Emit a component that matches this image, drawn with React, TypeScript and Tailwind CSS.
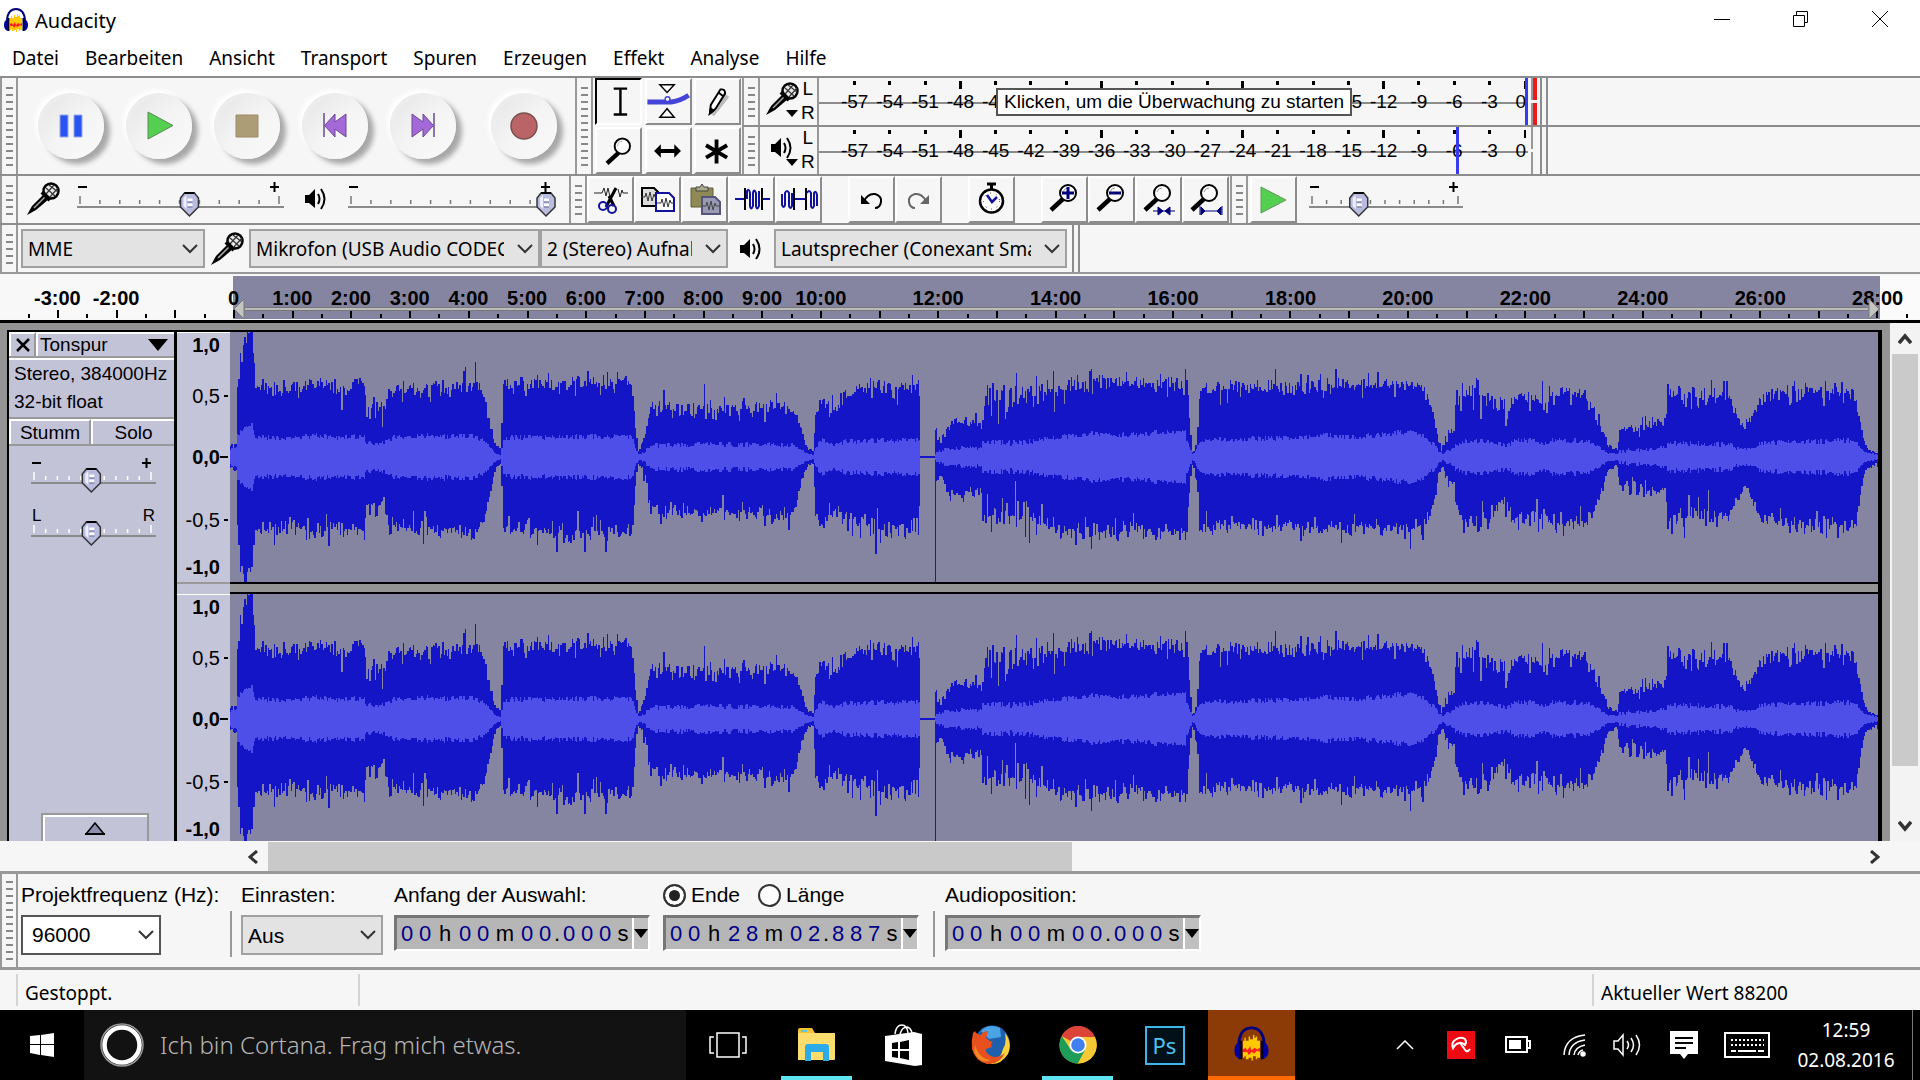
import type { ReactNode } from "react"
import clsx from "clsx"

const MENUS = ["Datei", "Bearbeiten", "Ansicht", "Transport", "Spuren", "Erzeugen", "Effekt", "Analyse", "Hilfe"]

/* ---------- waveform ---------- */

// x, peak above the axis, peak below the axis, rms, jitter
const ENVELOPE: number[][] = [
  [0, 12, 12, 8, 3], [6, 14, 14, 9, 3], [7, 72, 70, 22, 4], [9, 75, 80, 26, 6], [10, 110, 123, 28, 3], [12, 84, 100, 26, 3],
  [13, 125, 125, 30, 0], [16, 112, 125, 31, 0], [17, 130, 115, 31, 8], [21, 128, 110, 32, 6], [23, 100, 85, 26, 5],
  [25, 70, 72, 20, 7], [60, 66, 68, 19, 8], [85, 74, 78, 21, 7], [110, 68, 68, 20, 8], [134, 76, 75, 21, 6],
  [136, 42, 45, 13, 6], [143, 55, 52, 14, 9], [149, 44, 50, 13, 6], [153, 40, 46, 14, 8], [157, 68, 68, 19, 7],
  [190, 70, 75, 21, 8], [220, 70, 72, 21, 7], [240, 72, 78, 21, 8], [251, 68, 68, 18, 6], [256, 52, 52, 14, 3],
  [261, 28, 28, 8, 2], [265, 12, 12, 4, 1], [271, 8, 6, 2, 1], [272, 76, 72, 19, 6], [300, 72, 74, 20, 7],
  [340, 74, 78, 20, 8], [370, 74, 76, 21, 8], [401, 75, 75, 20, 6], [403, 52, 55, 16, 3], [405, 28, 30, 9, 3],
  [408, 5, 6, 3, 1], [411, 14, 12, 3, 3], [415, 24, 30, 6, 5], [420, 50, 52, 12, 5], [450, 48, 56, 12, 8],
  [480, 50, 54, 13, 7], [520, 48, 57, 12, 7], [550, 50, 60, 13, 7], [565, 45, 50, 12, 4], [571, 25, 25, 7, 2],
  [576, 9, 9, 4, 1], [583, 6, 5, 2, 1], [584, 38, 54, 9, 5], [592, 58, 68, 17, 7], [602, 44, 52, 13, 8], [612, 56, 58, 15, 9],
  [630, 68, 66, 16, 11], [660, 70, 73, 17, 10], [688, 72, 74, 17, 10], [689, 62, 48, 16, 4], [690, 1, 1, 0, 0],
  [704, 1, 1, 0, 0], [705, 27, 26, 6, 3], [710, 18, 18, 6, 3], [718, 32, 36, 9, 5], [728, 38, 38, 9, 4], [745, 35, 34, 9, 5],
  [751, 28, 35, 9, 4], [752, 58, 60, 15, 14], [780, 55, 58, 14, 14], [800, 62, 60, 15, 13], [825, 68, 72, 20, 9],
  [860, 76, 80, 23, 7], [900, 73, 72, 22, 7], [930, 75, 76, 25, 6], [955, 73, 76, 25, 7], [956, 82, 76, 18, 4],
  [960, 25, 22, 8, 2], [962, 4, 6, 3, 1], [967, 16, 30, 10, 4], [969, 68, 70, 16, 6], [1000, 68, 68, 18, 7], [1060, 70, 70, 19, 7],
  [1090, 72, 72, 22, 7], [1130, 72, 70, 20, 7], [1172, 74, 72, 25, 6], [1192, 70, 72, 23, 6], [1199, 55, 60, 15, 8],
  [1204, 36, 42, 12, 3], [1208, 15, 15, 6, 2], [1212, 10, 8, 3, 2], [1216, 26, 20, 6, 5], [1224, 25, 28, 9, 3],
  [1225, 58, 48, 12, 8], [1235, 62, 66, 16, 8], [1247, 66, 66, 17, 9], [1262, 54, 56, 16, 8], [1277, 42, 46, 11, 7],
  [1284, 60, 62, 17, 6], [1308, 60, 62, 16, 8], [1314, 48, 50, 13, 9], [1320, 62, 68, 17, 7], [1358, 64, 66, 16, 7],
  [1366, 42, 48, 12, 7], [1373, 26, 30, 8, 3], [1377, 12, 13, 4, 1], [1387, 7, 9, 3, 1], [1389, 26, 30, 6, 4],
  [1402, 33, 33, 7, 7], [1420, 36, 38, 8, 6], [1435, 32, 32, 9, 5], [1437, 66, 68, 14, 8], [1460, 58, 56, 13, 12],
  [1480, 62, 60, 13, 10], [1500, 58, 60, 13, 8], [1505, 42, 45, 9, 6], [1514, 31, 28, 8, 4], [1525, 46, 48, 9, 4], [1531, 64, 60, 15, 7],
  [1560, 62, 68, 15, 9], [1600, 68, 68, 16, 9], [1623, 66, 70, 17, 5], [1628, 42, 50, 12, 4], [1632, 20, 22, 7, 2],
  [1637, 8, 10, 4, 1], [1648, 4, 6, 2, 2],
]

// single-column peaks: x, above, below
const SPIKES: number[][] = [
  [235, 90, 70], [245, 95, 72], [327, 70, 95], [355, 76, 95], [377, 85, 84], [434, 67, 60], [474, 73, 58], [559, 48, 73],
  [683, 82, 74], [705, 27, 125], [763, 74, 58], [807, 81, 78], [861, 88, 92], [896, 85, 74], [956, 88, 83], [1045, 88, 72],
  [1071, 83, 84], [1106, 88, 68], [1111, 70, 86], [1180, 72, 92], [1193, 66, 83], [1248, 77, 75], [1312, 76, 72],
  [1327, 62, 76], [1442, 60, 77], [1481, 77, 62], [1565, 76, 60], [1596, 66, 81], [1605, 74, 65],
]

const WAVE_W = 1648
const COL = WAVE_W / 1172

function buildWave() {
  let seed = 20160802
  const rand = () => {
    seed = (seed * 1103515245 + 12345) % 2147483648
    return seed / 2147483648
  }
  const peakTop: string[] = []
  const peakBottom: string[] = []
  const rmsTop: string[] = []
  const rmsBottom: string[] = []
  let k = 0
  for (let i = 0; i < 1172; i++) {
    const x = i * COL
    while (k < ENVELOPE.length - 2 && ENVELOPE[k + 1][0] <= x) k++
    const a = ENVELOPE[k]
    const b = ENVELOPE[k + 1]
    const f = (x - a[0]) / (b[0] - a[0])
    const [, up0, down0, rms0, jitter] = a.map((v, n) => v + (b[n] - v) * f)
    const wobble = () => (rand() + rand() - 1) * jitter * 1.3 + (rand() < 0.24 ? (rand() - 0.55) * jitter * 4 : 0)
    let up = Math.max(up0 + wobble(), Math.min(up0, 1))
    let down = Math.max(down0 + wobble(), Math.min(down0, 1))
    const spike = SPIKES.find((s) => s[0] >= x && s[0] < x + COL)
    if (spike) {
      up = spike[1]
      down = spike[2]
    }
    const rms = Math.max(0, rms0 + (rand() - 0.5) * Math.min(jitter, 6) * 0.9)
    const x0 = x.toFixed(1)
    const x1 = (x + COL).toFixed(1)
    const row = (y: number) => `${x0},${y.toFixed(1)} ${x1},${y.toFixed(1)}`
    const rowBack = (y: number) => `${x1},${y.toFixed(1)} ${x0},${y.toFixed(1)}`
    peakTop.push(row(125 - Math.min(up, 125)))
    peakBottom.unshift(rowBack(125 + Math.min(down, 125)))
    rmsTop.push(row(125 - Math.min(rms, up)))
    rmsBottom.unshift(rowBack(125 + Math.min(rms, down)))
  }
  return {
    peak: [...peakTop, ...peakBottom].join(" "),
    rms: [...rmsTop, ...rmsBottom].join(" "),
  }
}

const WAVE = buildWave()

function Waveform() {
  return (
    <svg viewBox="0 0 1648 250" preserveAspectRatio="none" shapeRendering="crispEdges" className="block h-[250px] w-full">
      <polygon points={WAVE.peak} fill="#1515c8" />
      <polygon points={WAVE.rms} fill="#4e4ee9" />
    </svg>
  )
}

/* ---------- icons ---------- */

function Mic() {
  return (
    <svg width="34" height="34" viewBox="0 0 34 34">
      <path d="M1 33 L6 24 L18 12 L23 17 L10 28 Z" fill="#000" />
      <path d="M8 26 L19 15" stroke="#aaa" strokeWidth="1.5" />
      <circle cx="25" cy="9" r="7.5" fill="#e8e8e8" stroke="#000" strokeWidth="2.5" />
      <path d="M20 6 L29 14 M23 3 L32 10 M20 12 L28 3 M24 15 L32 6" stroke="#333" strokeWidth="1.2" />
      <path d="M16 10 L24 18" stroke="#000" strokeWidth="4" />
    </svg>
  )
}

function Speaker() {
  return (
    <svg width="24" height="26" viewBox="0 0 24 26" fill="none" stroke="#000" strokeWidth="2">
      <path d="M1 9 H5 L11 3 V22 L5 17 H1 Z" fill="#000" stroke="none" />
      <path d="M14 8 Q17 13 14 18" />
      <path d="M17 3 Q24 13 17 23" />
    </svg>
  )
}

function Lens({ children }: { children?: ReactNode }) {
  return (
    <svg width="36" height="38" viewBox="0 0 36 38">
      <path d="M4 29 L17 17" stroke="#000" strokeWidth="4.5" />
      <circle cx="21" cy="12" r="8" fill="#fff" stroke="#000" strokeWidth="2" />
      <path d="M16 11 Q17 7 21 7" stroke="#999" fill="none" />
      {children}
    </svg>
  )
}

function AudacityLogo({ size }: { size: number }) {
  return (
    <svg width={size} height={size} viewBox="0 0 26 26">
      <path d="M4 13 Q5 2 13 2 Q21 2 22 13" fill="none" stroke="#00007a" strokeWidth="2" />
      <path
        d="M7 23 V11 H8 V9 H9 V11 H11 V8 H12 V10 H14 V7 H15 V9 H16 V8 H17 V11 H19 V23 H17 V24 H16 V22 H14 V25 H13 V23 H11 V24 H9 V22 H8 V23 Z"
        fill="#ffc800"
      />
      <path d="M7 17 L9 16 L10 18 L12 15 L13 18 L15 16 L17 17 L19 16 V19 L17 18 L15 20 L13 19 L11 21 L10 19 L7 19 Z" fill="#f22" />
      <path d="M5 12 Q1 13 1 18 Q1 23 5 24 Z M21 12 Q25 13 25 18 Q25 23 21 24 Z" fill="#0000a0" />
      <path d="M5.5 11 V24 M20.5 11 V24" stroke="#000030" strokeWidth="2" />
    </svg>
  )
}

const TRANSPORT: { label: string; icon: ReactNode }[] = [
  { label: "Pause", icon: <path d="M9 9 h8 v22 h-8 z M23 9 h8 v22 h-8 z" fill="#2a54f0" stroke="#98a8e8" /> },
  { label: "Wiedergabe", icon: <path d="M9 6 L34 19.5 L9 33 Z" fill="#55cf50" stroke="#5a8a58" /> },
  { label: "Stopp", icon: <path d="M9 9 h22 v22 h-22 z" fill="#ad9d76" stroke="#9a8c68" /> },
  {
    label: "Zum Anfang",
    icon: (
      <g fill="#a468d8" stroke="#6a4a90">
        <path d="M9 7 V31" strokeWidth="1.5" />
        <path d="M20 8 V16 L31 8 V31 L20 23 V31 L9.5 19.5 Z" />
      </g>
    ),
  },
  {
    label: "Zum Ende",
    icon: (
      <g fill="#a468d8" stroke="#6a4a90">
        <path d="M31 7 V31" strokeWidth="1.5" />
        <path d="M20 8 V16 L9 8 V31 L20 23 V31 L30.5 19.5 Z" />
      </g>
    ),
  },
  { label: "Aufnahme", icon: <circle cx="20" cy="20" r="13" fill="#bb6468" stroke="#7a5050" strokeWidth="1.5" /> },
]

const TOOLS: { label: string; icon: ReactNode }[] = [
  { label: "Auswahl", icon: <path d="M19 10 h14 M19 37 h14 M26 10 v27" stroke="#000" strokeWidth="2.5" fill="none" /> },
  {
    label: "Hüllkurve",
    icon: (
      <g fill="#fff" stroke="#000" strokeWidth="1.5">
        <path d="M2 24 H27 Q36 23 45 17" stroke="#4444d8" strokeWidth="5" fill="none" />
        <path d="M15 6 H30 L22.5 14 Z M15 40 H30 L22.5 31 Z" />
        <circle cx="23" cy="21" r="2.5" stroke="#4444d8" />
      </g>
    ),
  },
  {
    label: "Zeichnen",
    icon: (
      <g strokeWidth="2">
        <path d="M18 37 L34 17" stroke="#bbb" strokeWidth="6" />
        <path d="M16 36 L17 27 L27 11 Q32 10 32 15 L22 31 Z" fill="#fff" stroke="#000" />
        <path d="M16 36 L17 31 L20 33 Z M25 14 L30 18" stroke="#000" fill="#000" />
      </g>
    ),
  },
  {
    label: "Zoom",
    icon: (
      <g>
        <path d="M12 37 L24 26" stroke="#000" strokeWidth="4.5" />
        <circle cx="28" cy="19" r="8" fill="#fff" stroke="#000" strokeWidth="2" />
        <path d="M23 19 Q23 14 28 14" stroke="#aaa" fill="none" />
      </g>
    ),
  },
  {
    label: "Verschieben",
    icon: <path d="M9 24 L16 17 V22 H30 V17 L37 24 L30 31 V26 H16 V31 Z" fill="#000" />,
  },
  { label: "Multi", icon: <path d="M23 12 V37 M12 18 L34 31 M34 18 L12 31" stroke="#000" strokeWidth="4" /> },
]

const trace = "M0 6 h4 l1 -4 l2 8 l2 -9 l2 9 l2 -7 l1 3 h3"

const EDIT: ({ label: string; icon: ReactNode } | null)[] = [
  {
    label: "Ausschneiden",
    icon: (
      <g fill="none">
        <path d="M2 12 h8 l2 -5 l2 8 l2 -8 l2 9 M26 8 l2 8 l2 -7 l1 3 h5" stroke="#222" />
        <path d="M24 7 L14 26 M17 15 L22 25" stroke="#000" strokeWidth="3" />
        <circle cx="11" cy="25" r="4" stroke="#1111a0" strokeWidth="2" />
        <circle cx="20" cy="28" r="4" stroke="#1111a0" strokeWidth="2" />
      </g>
    ),
  },
  {
    label: "Kopieren",
    icon: (
      <g>
        <path d="M3 7 h12 l4 4 v14 h-16 z" fill="#ddd" stroke="#000" strokeWidth="2" />
        <path d={trace} transform="translate(2 10)" fill="none" stroke="#333" />
        <path d="M17 12 h13 l5 5 v13 h-18 z" fill="#fff" stroke="#1111a0" strokeWidth="2" />
        <path d={trace} transform="translate(18 16)" fill="none" stroke="#333" />
      </g>
    ),
  },
  {
    label: "Einfügen",
    icon: (
      <g>
        <path d="M5 7 h22 v19 h-22 z" fill="#8f8a55" stroke="#5f5c38" />
        <path d="M10 10 V6 h4 l2 -3 l2 3 h4 v4 z" fill="#aaa88a" stroke="#444" />
        <path d="M16 16 h13 l5 5 v12 h-18 z" fill="#9a9ab4" stroke="#54547c" strokeWidth="2" />
        <path d={trace} transform="translate(16 19)" fill="none" stroke="#444" />
      </g>
    ),
  },
  {
    label: "Zuschneiden",
    icon: (
      <g fill="none" stroke="#1111a0" strokeWidth="2">
        <path d="M2 18 H11 M29 18 H37" />
        <path d="M12 7 V29 M29 7 V29" stroke="#000" />
        <path d="M14 18 V10 Q16 7 17 12 V25 Q18 30 20 25 V12 Q21 7 23 12 V25 Q24 30 26 25 V10" />
      </g>
    ),
  },
  {
    label: "Stille",
    icon: (
      <g fill="none" stroke="#1111a0" strokeWidth="2">
        <path d="M2 13 V24 Q4 28 5 24 V12 Q7 8 9 12 V25 Q10 29 12 25 V12" />
        <path d="M14 18 H26" />
        <path d="M14 7 V29 M26 7 V29" stroke="#000" />
        <path d="M27 12 Q29 8 31 12 V25 Q32 29 34 25 V12 Q36 9 37 14 V25" />
      </g>
    ),
  },
  null,
  {
    label: "Rückgängig",
    icon: (
      <g>
        <path d="M11 20 Q15 12 22 13 Q29 15 28 21 Q27 27 22 27" fill="none" stroke="#000" strokeWidth="2" />
        <path d="M8 14 V23 H17 Z" fill="#000" />
      </g>
    ),
  },
  {
    label: "Wiederholen",
    icon: (
      <g>
        <path d="M26 20 Q22 12 15 13 Q8 15 9 21 Q10 27 15 27" fill="none" stroke="#666" strokeWidth="2" />
        <path d="M29 14 V23 H20 Z" fill="#666" />
      </g>
    ),
  },
  null,
  {
    label: "Timer",
    icon: (
      <g>
        <path d="M14 3 h9 M18.5 3 v5" stroke="#000" strokeWidth="3" />
        <circle cx="18.5" cy="20" r="11.5" fill="#fff" stroke="#000" strokeWidth="2.5" />
        <path d="M14 14 L19 21 L24 16" fill="none" stroke="#1111a0" strokeWidth="2.5" />
        <circle cx="18.5" cy="20" r="8" fill="none" stroke="#333" strokeDasharray="1 5" />
      </g>
    ),
  },
  null,
]

const ZOOMS: { label: string; icon: ReactNode }[] = [
  {
    label: "Vergrößern",
    icon: <Lens><path d="M15 12 h12 M21 6 v12" stroke="#00007a" strokeWidth="3" /></Lens>,
  },
  { label: "Verkleinern", icon: <Lens><path d="M15 12 h12" stroke="#00007a" strokeWidth="3" /></Lens> },
  {
    label: "Auswahl einpassen",
    icon: (
      <Lens>
        <path d="M12 30 h22 M17 26 l5 4 l-5 4 z M29 26 l-5 4 l5 4 z" stroke="#00007a" fill="#00007a" />
      </Lens>
    ),
  },
  {
    label: "Projekt einpassen",
    icon: (
      <Lens>
        <path d="M13 30 h20 M12 25 v9 M34 25 v9 M13 26 l4 4 l-4 4 z M33 26 l-4 4 l4 4 z" stroke="#00007a" fill="#00007a" />
      </Lens>
    ),
  },
]

/* ---------- building blocks ---------- */

function Grip({ lines }: { lines: number }) {
  return (
    <div className="flex w-[18px] shrink-0 flex-col items-center justify-center gap-[5px] border-x-2 border-[#999] bg-[#f6f6f6]">
      {Array.from({ length: lines }, (_, i) => (
        <span key={i} className="h-[2px] w-[7px] bg-[#888]" />
      ))}
    </div>
  )
}

function IconButton({ label, children, active }: { label: string; children: ReactNode; active?: boolean }) {
  return (
    <button
      aria-label={label}
      className={clsx(
        "flex w-[47px] shrink-0 items-center justify-center border-2",
        active
          ? "border-t-black border-r-white border-b-white border-l-black"
          : "border-t-white border-r-[#8c8c8c] border-b-[#8c8c8c] border-l-white",
      )}
    >
      {children}
    </button>
  )
}

interface SliderProps {
  label: string
  width: number
  value: number
  ends?: [string, string]
  tick?: string
}

function Slider({ label, width, value, ends, tick = "#777" }: SliderProps) {
  const x = 3 + ((width - 8) * value) / 100
  return (
    <div className="relative flex shrink-0 flex-col" style={{ width }}>
      <div className="flex h-[11px] items-center justify-between px-[1px] text-[17px] leading-none">
        {ends ? (
          <>
            <span>{ends[0]}</span>
            <span>{ends[1]}</span>
          </>
        ) : (
          <>
            <span className="h-[2px] w-[9px] bg-black" />
            <svg width="9" height="10" viewBox="0 0 9 10" className="mr-1">
              <path d="M0 5 H9 M4.5 0 V10" stroke="#000" strokeWidth="2" />
            </svg>
          </>
        )}
      </div>
      <svg width={width} height="25" viewBox={`0 0 ${width} 25`} className="block overflow-visible">
        {Array.from({ length: 11 }, (_, i) => {
          const tx = 3 + ((width - 8) * i) / 10
          const end = i === 0 || i === 10
          return <path key={i} d={`M${tx} ${end ? 4 : 8} V12`} stroke={tick} strokeWidth="1.5" />
        })}
        <path d={`M0 15 H${width}`} stroke="#8a8a8a" strokeWidth="2" />
        <g transform={`translate(${x - 10} 0)`}>
          <path d="M5 1 H15 L19 6 V15 L10 24 L1 15 V6 Z" fill="#b9bbdf" stroke="#333" strokeWidth="1.5" />
          <path d="M4 6 L7 3 V17 L4 14 Z" fill="#eef" />
          <path d="M8 8 h5 M8 13 h5" stroke="#fff" strokeWidth="3" />
          <path d="M8 10 h5 M8 15 h5" stroke="#66688f" />
          <path d="M5 1 H15" stroke="#000" strokeWidth="2" />
        </g>
      </svg>
      <input type="range" aria-label={label} defaultValue={value} className="absolute inset-0 size-full opacity-0" />
    </div>
  )
}

function Dropdown({ label, value, className }: { label: string; value: string; className: string }) {
  return (
    <div className={clsx("relative shrink-0", className)}>
      <select
        aria-label={label}
        className="size-full appearance-none overflow-hidden border-2 border-[#a0a0a0] bg-[#e3e3e3] pt-[1px] pr-[34px] pl-[5px] whitespace-nowrap"
      >
        <option>{value}</option>
      </select>
      <Chevron />
    </div>
  )
}

function Chevron() {
  return (
    <svg width="16" height="10" viewBox="0 0 16 10" className="pointer-events-none absolute top-[15px] right-[7px]">
      <path d="M1 1 L8 8 L15 1" fill="none" stroke="#333" strokeWidth="2" />
    </svg>
  )
}

function Meter({ kind, mark, clipped, tip }: { kind: "Aufnahme" | "Wiedergabe"; mark: string; clipped?: boolean; tip?: string }) {
  const marks = Array.from({ length: 19 }, (_, i) => -57 + i * 3)
  return (
    <div className="flex flex-1 border-t-2 border-[#8c8c8c]">
      <Grip lines={5} />
      <button aria-label={`Pegel ${kind}`} className="flex w-[57px] shrink-0 items-center pl-[4px]">
        <span className="flex w-9 justify-center pb-[6px]">{kind === "Aufnahme" ? <Mic /> : <Speaker />}</span>
        <svg width="12" height="7" viewBox="0 0 12 7" className="-ml-[14px] translate-y-3">
          <path d="M0 0 H12 L6 7 Z" fill="#000" />
        </svg>
        <span className="ml-[3px] flex flex-col gap-[4px] pb-[2px] text-[19px] leading-5">
          <span>L</span>
          <span>R</span>
        </span>
      </button>
      <div className="relative flex w-[711px] shrink-0 flex-col border-l-2 border-[#999] pr-[2px] pl-[18px]">
        <span className="absolute top-[24px] right-0 left-0 h-[2px] bg-[#8c8c8c]" />
        <div className="flex h-[12px] items-start pt-[3px]">
          {marks.map((m) => (
            <span key={m} className="flex flex-1 justify-center">
              <span className={clsx("w-[3px] bg-black", m % 12 === 0 ? "h-[8px]" : "h-[4px]")} />
            </span>
          ))}
          <span className="flex w-[19px] justify-end">
            <span className="h-[8px] w-[2px] bg-black" />
          </span>
        </div>
        <div className="relative flex text-[19px] leading-6">
          {marks.map((m) => (
            <span key={m} className="flex-1 text-center">
              {m}
            </span>
          ))}
          <span className="w-[19px] text-right">0</span>
        </div>
        <span className={clsx("absolute inset-y-0 w-[3px] bg-[#3a3af0]", mark)} />
        {tip && (
          <div className="absolute top-[10px] left-[177px] border-2 border-[#555] bg-white px-[6px] text-[19px] leading-6 whitespace-nowrap">
            {tip}
          </div>
        )}
      </div>
      <div className="ml-[3px] flex w-[6px] flex-col gap-[3px]">
        <span className={clsx("h-[22px] border-l-2 border-[#999]", clipped && "bg-[#f01818]")} />
        <span className={clsx("flex-1 border-l-2 border-[#999]", clipped && "bg-[#f01818]")} />
      </div>
      <div className="ml-[3px] w-[8px] border-x-2 border-[#8c8c8c]" />
    </div>
  )
}

const TIME_CLASS: Record<string, string> = { h: "w-[22px]", m: "w-[26px]", s: "w-[18px]", ".": "w-[6px]" }

function TimeField({ label, value }: { label: string; value: string }) {
  return (
    <div
      aria-label={label}
      className="flex h-9 w-[256px] items-center border-t-[3px] border-r-2 border-b-2 border-l-[3px] border-t-[#777] border-r-white border-b-white border-l-[#777] bg-[#b6b6b6] pl-[1px] text-[22px] leading-8"
    >
      {value.split("").map((c, i) => (
        <span
          key={i}
          className={clsx("text-center", TIME_CLASS[c] ?? "w-[18px]", /\d/.test(c) ? "text-[#00008b]" : "text-black")}
        >
          {c}
        </span>
      ))}
      <button aria-label="Format" className="flex h-full flex-1 items-center justify-center border-l-2 border-white bg-[#c0c0c0]">
        <svg width="14" height="9" viewBox="0 0 14 9">
          <path d="M0 0 H14 L7 9 Z" fill="#000" />
        </svg>
      </button>
    </div>
  )
}

/* ---------- toolbars ---------- */

function Toolbars() {
  return (
    <div className="bg-[#f6f6f6] font-['Liberation_Sans',sans-serif]">
      <div className="flex h-[98px]">
        <div className="flex border-t-2 border-[#8c8c8c]">
          <Grip lines={12} />
          <div className="flex w-[557px] items-center pl-[20px]">
            {TRANSPORT.map((b) => (
              <button
                key={b.label}
                aria-label={b.label}
                className="mr-[22px] flex size-[66px] shrink-0 items-center justify-center rounded-full bg-linear-to-br from-[#e4e4e4] via-[#f4f4f4] to-[#fafafa] shadow-[inset_2px_2px_5px_#eeeeee,6px_5px_5px_#a8a8a8,-3px_-3px_5px_#ffffff,0_0_0_4px_#f7f7f7] last:ml-[13px]"
              >
                <svg width="40" height="40" viewBox="0 0 40 40">
                  {b.icon}
                </svg>
              </button>
            ))}
          </div>
          <Grip lines={12} />
          <div className="grid w-[149px] grid-cols-3 grid-rows-2 gap-[2px] pl-[2px]">
            {TOOLS.map((tool, i) => (
              <IconButton key={tool.label} label={tool.label} active={i === 0}>
                <svg width="47" height="46" viewBox="0 0 48 48" className="shrink-0">
                  {tool.icon}
                </svg>
              </IconButton>
            ))}
          </div>
        </div>
        <div className="flex flex-1 flex-col">
          <Meter kind="Aufnahme" mark="right-0" clipped tip="Klicken, um die Überwachung zu starten" />
          <Meter kind="Wiedergabe" mark="right-[69px]" />
        </div>
      </div>

      <div className="flex h-[49px] border-t-2 border-[#8c8c8c]">
        <Grip lines={5} />
        <div className="flex w-[551px] items-center pb-[1px]">
          <span className="ml-2">
            <Mic />
          </span>
          <div className="ml-[17px]">
            <Slider label="Aufnahmelautstärke" width={207} value={55} />
          </div>
          <span className="mx-5">
            <Speaker />
          </span>
          <Slider label="Wiedergabelautstärke" width={207} value={98} />
        </div>
        <Grip lines={5} />
        {EDIT.map((b, i) =>
          b ? (
            <IconButton key={b.label} label={b.label}>
              <svg width="38" height="38" viewBox="0 0 38 38" className="shrink-0">
                {b.icon}
              </svg>
            </IconButton>
          ) : (
            <span key={i} className="w-[26px]" />
          ),
        )}
        {ZOOMS.map((b) => (
          <IconButton key={b.label} label={b.label}>
            {b.icon}
          </IconButton>
        ))}
        <div className="flex gap-[2px] pl-[1px]">
          <Grip lines={5} />
          <IconButton label="Mit Geschwindigkeit abspielen">
            <svg width="28" height="28" viewBox="0 0 28 28">
              <path d="M1 1 L26 14 L1 27 Z" fill="#55cf50" stroke="#5a9a58" />
            </svg>
          </IconButton>
        </div>
        <div className="ml-3 flex items-center pb-[1px]">
          <Slider label="Abspielgeschwindigkeit" width={154} value={32} />
        </div>
      </div>

      <div className="flex h-[49px] items-stretch border-t-2 border-[#8c8c8c] font-['Noto_Sans',sans-serif] text-[19px]">
        <Grip lines={5} />
        <div className="flex items-center pl-[3px]">
          <Dropdown label="Audio-Host" value="MME" className="h-[39px] w-[184px]" />
          <span className="mx-[5px]">
            <Mic />
          </span>
          <Dropdown label="Aufnahmegerät" value="Mikrofon (USB Audio CODEC)" className="h-[39px] w-[291px]" />
          <Dropdown label="Aufnahmekanäle" value="2 (Stereo) Aufnahmekanäle" className="h-[39px] w-[188px]" />
          <span className="mx-[11px]">
            <Speaker />
          </span>
          <Dropdown label="Wiedergabegerät" value="Lautsprecher (Conexant Smart Audio)" className="h-[39px] w-[293px]" />
        </div>
        <div className="ml-[5px] w-[8px] border-x-2 border-[#8c8c8c]" />
      </div>
    </div>
  )
}

/* ---------- ruler and track ---------- */

function minuteLabel(minute: number) {
  if (minute === 0) return "0"
  if (minute === -1 || (minute > 10 && minute % 2)) return ""
  return `${minute}:00`
}

function Timeline() {
  return (
    <div className="relative h-[51px] border-t-2 border-b-[3px] border-t-[#999] border-b-black bg-[#f6f6f6] font-['Liberation_Sans',sans-serif]">
      <div className="flex h-[45px] pt-[2px]">
        <span className="w-[233px] bg-[#f8f8f8]" />
        <span className="flex-1 bg-[#8585a1]" />
        <span className="w-10 bg-[#fbfbfb]" />
      </div>
      <div className="absolute inset-0 flex flex-col overflow-hidden pt-[12px]">
        <div className="mr-[13px] ml-[28px] flex text-[20px] leading-6 font-bold">
          {Array.from({ length: 32 }, (_, i) => (
            <span key={i} className="flex w-0 flex-1 justify-center whitespace-nowrap">
              {minuteLabel(i - 3)}
            </span>
          ))}
        </div>
        <div className="-mr-[1px] ml-[14px] flex h-[8px] items-end">
          {Array.from({ length: 65 }, (_, i) => (
            <span key={i} className="flex flex-1 justify-center">
              <span className={clsx("w-[2px] bg-black", i % 2 ? "h-[8px]" : "h-[4px]")} />
            </span>
          ))}
        </div>
      </div>
      <div className="absolute right-10 bottom-0 left-[233px] flex items-center">
        <svg width="12" height="22" viewBox="0 0 12 22">
          <path d="M1 11 L11 1 V21 Z" fill="#c4c4c0" stroke="#777" />
        </svg>
        <span className="h-[4px] flex-1 border-y border-t-[#777] border-b-[#777] bg-[#bbb]" />
        <svg width="12" height="22" viewBox="0 0 12 22">
          <path d="M11 11 L1 1 V21 Z" fill="#c4c4c0" stroke="#777" />
        </svg>
      </div>
    </div>
  )
}

const LEVELS = [
  { text: "1,0", className: "font-bold" },
  { text: "0,5", className: "mt-[27px]", tick: "w-[4px]" },
  { text: "0,0", className: "mt-[37px] font-bold", tick: "w-[8px]" },
  { text: "-0,5", className: "mt-[39px]", tick: "w-[4px]" },
  { text: "-1,0", className: "mt-[23px] font-bold" },
]

function Channel({ last }: { last?: boolean }) {
  return (
    <div className={clsx("flex overflow-hidden", last ? "h-0 min-h-0 flex-1" : "h-[250px] shrink-0")}>
      <div className="w-[53px] shrink-0 border-t border-white bg-[#c5c5d9] text-[20px] leading-6">
        {LEVELS.map((l) => (
          <div key={l.text} className={clsx("relative h-6 pr-[10px] text-right", l.className)}>
            {l.text}
            {l.tick && <span className={clsx("absolute top-[11px] right-[2px] h-[2px] bg-black", l.tick)} />}
          </div>
        ))}
      </div>
      <div className="flex-1 bg-[#8585a1]">
        <Waveform />
      </div>
    </div>
  )
}

function Track() {
  return (
    <section className="flex min-h-[420px] flex-[1_1_0px] overflow-hidden bg-[#949494] pt-[7px] pl-[7px] font-['Liberation_Sans',sans-serif] text-[19px]">
      <div className="flex min-w-0 flex-1 border-x-2 border-t-2 border-black border-r-[4px]">
        <div className="flex w-[168px] shrink-0 flex-col border-r-[3px] border-black bg-[#c3c3d7]">
          <div className="flex h-[26px] shrink-0 border-b-2 border-[#999] leading-5">
            <button aria-label="Spur schließen" className="flex w-[27px] items-center justify-center border-2 border-white border-r-[#999] border-b-0">
              <svg width="14" height="14" viewBox="0 0 14 14">
                <path d="M1 1 L13 13 M13 1 L1 13" stroke="#000" strokeWidth="2.5" />
              </svg>
            </button>
            <button className="flex flex-1 items-center justify-between border-t-2 border-l-2 border-white pr-[6px] pl-[2px]">
              Tonspur
              <svg width="20" height="12" viewBox="0 0 20 12">
                <path d="M0 0 H20 L10 12 Z" fill="#000" />
              </svg>
            </button>
          </div>
          <div className="h-[59px] shrink-0 border-t-2 border-white pl-[5px] leading-7 whitespace-nowrap">
            Stereo, 384000Hz
            <br />
            32-bit float
          </div>
          <div className="flex h-[29px] shrink-0 border-y-2 border-[#999] leading-5">
            <button className="w-[82px] border-2 border-white border-b-0 border-r-[#999]">Stumm</button>
            <button className="flex-1 border-t-2 border-l-2 border-white">Solo</button>
          </div>
          <div className="mt-[11px] ml-[22px] flex flex-col gap-[17px]">
            <Slider label="Spurlautstärke" width={125} value={49} tick="#fff" />
            <Slider label="Balance" width={125} value={49} ends={["L", "R"]} tick="#fff" />
          </div>
          <button
            aria-label="Spur einklappen"
            className="mt-auto ml-[32px] flex h-7 w-[108px] shrink-0 items-center justify-center border-2 border-b-0 border-[#999] shadow-[inset_2px_2px_0_#ffffff]"
          >
            <svg width="20" height="13" viewBox="0 0 20 13">
              <path d="M1 12 L10 1 L19 12 Z" fill="#8e8eb0" stroke="#000" strokeWidth="1.5" />
              <path d="M0 12 H20" stroke="#000" strokeWidth="2" />
            </svg>
          </button>
        </div>
        <div className="flex min-w-0 flex-1 flex-col">
          <Channel />
          <div className="flex h-3 shrink-0">
            <span className="w-[53px] border-t-2 border-[#999] bg-[#c3c3d7]" />
            <span className="flex-1 border-y-2 border-black bg-[#949494]" />
          </div>
          <Channel last />
        </div>
      </div>
      <div className="-mt-[7px] ml-2 flex w-[30px] shrink-0 flex-col items-center bg-[#f3f3f3] px-[2px]">
        <button aria-label="Nach oben" className="flex h-[31px] items-center">
          <svg width="14" height="12" viewBox="0 0 14 12">
            <path d="M1 10 L7 3 L13 10" fill="none" stroke="#333" strokeWidth="3.5" />
          </svg>
        </button>
        <span className="h-0 w-full flex-[413] bg-[#cacaca]" />
        <span className="flex-[44]" />
        <button aria-label="Nach unten" className="flex h-[31px] items-center">
          <svg width="14" height="12" viewBox="0 0 14 12">
            <path d="M1 2 L7 9 L13 2" fill="none" stroke="#333" strokeWidth="3.5" />
          </svg>
        </button>
      </div>
    </section>
  )
}

function ScrollBar() {
  return (
    <div className="flex h-[30px] items-stretch bg-[#f6f6f6] pt-[1px] pr-[33px] pl-[238px]">
      <button aria-label="Nach links" className="flex w-[30px] items-center justify-center">
        <svg width="10" height="14" viewBox="0 0 10 14">
          <path d="M9 1 L2 7 L9 13" fill="none" stroke="#333" strokeWidth="3" />
        </svg>
      </button>
      <span className="flex-[803] bg-[#c9c9c9]" />
      <span className="flex-[791]" />
      <button aria-label="Nach rechts" className="flex w-[24px] items-center justify-center">
        <svg width="10" height="14" viewBox="0 0 10 14">
          <path d="M1 1 L8 7 L1 13" fill="none" stroke="#333" strokeWidth="3" />
        </svg>
      </button>
    </div>
  )
}

/* ---------- selection bar, status, taskbar ---------- */

function RadioLabel({ text, checked }: { text: string; checked?: boolean }) {
  return (
    <label className="flex items-center gap-[5px]">
      <input
        type="radio"
        name="selection-end"
        defaultChecked={checked}
        className="size-[23px] appearance-none rounded-full border-2 border-[#333] bg-white checked:shadow-[inset_0_0_0_4px_#ffffff] checked:bg-[#222]"
      />
      {text}
    </label>
  )
}

function SelectionBar() {
  return (
    <div className="flex h-[99px] border-y-[3px] border-[#999] bg-[#f6f6f6] font-['Liberation_Sans',sans-serif] text-[21px] leading-6">
      <Grip lines={12} />
      <div className="flex items-start pt-[9px] pl-[3px]">
        <div className="flex w-[209px] flex-col gap-[8px]">
          <label htmlFor="rate" className="whitespace-nowrap">
            Projektfrequenz (Hz):
          </label>
          <div className="relative h-10 w-[140px]">
            <input id="rate" defaultValue="96000" className="size-full border-2 border-[#555] bg-white pl-[9px]" />
            <Chevron />
          </div>
        </div>
        <span className="mt-7 h-[46px] w-[2px] bg-[#999]" />
        <div className="ml-[9px] flex w-[153px] flex-col gap-[8px]">
          <span>Einrasten:</span>
          <Dropdown label="Einrasten" value="Aus" className="h-10 w-[142px]" />
        </div>
        <div className="flex w-[269px] flex-col gap-[8px]">
          <span>Anfang der Auswahl:</span>
          <TimeField label="Anfang der Auswahl" value="00h00m00.000s" />
        </div>
        <div className="flex w-[270px] flex-col gap-[8px]">
          <div className="flex h-6 gap-[18px]">
            <RadioLabel text="Ende" checked />
            <RadioLabel text="Länge" />
          </div>
          <TimeField label="Ende der Auswahl" value="00h28m02.887s" />
        </div>
        <span className="mt-7 h-[46px] w-[2px] bg-[#999]" />
        <div className="ml-[10px] flex flex-col gap-[8px]">
          <span>Audioposition:</span>
          <TimeField label="Audioposition" value="00h00m00.000s" />
        </div>
      </div>
    </div>
  )
}

function TaskIcon({ label, children, open, active }: { label: string; children: ReactNode; open?: boolean; active?: boolean }) {
  return (
    <button
      aria-label={label}
      className={clsx(
        "relative flex w-[87px] items-center justify-center",
        active && "border-b-4 border-[#ff6a00] bg-[#8c3a06]",
      )}
    >
      {children}
      {open && <span className="absolute inset-x-2 bottom-0 h-1 bg-[#5fe4f2]" />}
    </button>
  )
}

function Taskbar() {
  return (
    <footer className="flex h-[70px] shrink-0 bg-black text-white">
      <button aria-label="Start" className="flex w-[84px] items-center justify-center">
        <svg width="24" height="24" viewBox="0 0 24 24" fill="#fff">
          <path d="M0 3 L10 2 V11 H0 Z M11 2 L24 0 V11 H11 Z M0 12 H10 V22 L0 20 Z M11 12 H24 V24 L11 22 Z" />
        </svg>
      </button>
      <label className="flex w-[602px] items-center gap-4 bg-[#121212] pl-4">
        <svg width="44" height="44" viewBox="0 0 44 44" fill="none">
          <circle cx="22" cy="22" r="21" stroke="#999" strokeWidth="1.5" />
          <circle cx="22" cy="22" r="17.5" stroke="#fff" strokeWidth="4.5" />
        </svg>
        <input
          aria-label="Suche"
          placeholder="Ich bin Cortana. Frag mich etwas."
          className="flex-1 bg-transparent text-[24px] font-light outline-none placeholder:text-[#b5b5b5]"
        />
      </label>
      <button aria-label="Taskansicht" className="flex w-[87px] items-center justify-start pl-[23px]">
        <svg width="38" height="26" viewBox="0 0 38 26" fill="none" stroke="#fff" strokeWidth="1.5">
          <path d="M8 1 H30 V25 H8 Z M5 5 H1 V21 H5 M33 5 H37 V21 H33" />
        </svg>
      </button>
      <TaskIcon label="Explorer" open>
        <svg width="38" height="34" viewBox="0 0 38 34">
          <path d="M0 2 Q0 0 2 0 H14 L17 5 H0 Z" fill="#f2c230" />
          <path d="M0 5 H37 V31 Q37 32 36 32 H0 Z" fill="#fbdc6c" />
          <path d="M3 2 h6 v2 h-6 z" fill="#5cc8e8" />
          <path d="M7 19 Q7 16 10 16 H28 Q31 16 31 19 V33 H25 V24 H13 V33 H7 Z" fill="#2cabe8" />
        </svg>
      </TaskIcon>
      <TaskIcon label="Store">
        <svg width="38" height="42" viewBox="0 0 38 42">
          <path d="M10 10 Q11 1 17 1 Q22 1 23 9 M15 10 Q17 3 22 3 Q26 4 27 9" fill="none" stroke="#fff" strokeWidth="1.5" />
          <path d="M0 12 L29 8 L37 10 V41 L30 42 L0 37 Z" fill="#fff" />
          <path d="M7 19 L13 18 V25 H7 Z M15 18 L24 16 V25 H15 Z M7 27 H13 V34 L7 33 Z M15 27 H24 V36 L15 34 Z" fill="#000" />
        </svg>
      </TaskIcon>
      <TaskIcon label="Firefox">
        <svg width="40" height="40" viewBox="0 0 40 40">
          <circle cx="21" cy="18" r="17.5" fill="#1e5fae" />
          <path d="M10 6 Q18 -2 29 3 L30 12 L18 14 Z" fill="#4aa4e4" />
          <path d="M34 8 Q42 18 37 29 Q30 40 19 39 Q30 34 32 24 Q36 18 34 8 Z" fill="#ffd23c" />
          <path d="M2 8 Q0 16 1 24 Q4 36 16 39 Q28 40 34 28 Q26 34 20 31 Q14 28 15 24 L21 22 Q19 19 22 17 Q18 16 15 13 L17 6 Q12 6 10 10 Q5 9 4 6 Z" fill="#e8501e" />
          <path d="M4 20 Q8 34 20 35 Q12 39 6 32 Q2 27 4 20 Z" fill="#f68a22" />
        </svg>
      </TaskIcon>
      <TaskIcon label="Chrome" open>
        <svg width="38" height="38" viewBox="0 0 38 38">
          <circle cx="19" cy="19" r="18.5" fill="#f7c934" />
          <path d="M19 19 L2.5 10 A18.5 18.5 0 0 1 36 11 H19 Z" fill="#dc4437" />
          <path d="M19 37.5 A18.5 18.5 0 0 1 2.8 10 L12 24 L26 24 Z" fill="#1f9d58" />
          <path d="M19 37.5 L27 23 L19 11 H36 A18.5 18.5 0 0 1 19 37.5 Z" fill="#f7c934" />
          <circle cx="19" cy="19" r="8.5" fill="#fff" />
          <circle cx="19" cy="19" r="6.8" fill="#3f7ff0" />
        </svg>
      </TaskIcon>
      <TaskIcon label="Photoshop">
        <span className="flex h-[39px] w-10 items-center justify-center border-2 border-[#3fb4e8] bg-[#02101a] text-[22px] text-[#4cc4f4]">
          Ps
        </span>
      </TaskIcon>
      <TaskIcon label="Audacity" active>
        <AudacityLogo size={37} />
      </TaskIcon>

      <div className="ml-auto flex items-center">
        <svg width="18" height="10" viewBox="0 0 18 10" fill="none" stroke="#fff" strokeWidth="1.5">
          <path d="M1 9 L9 1 L17 9" />
        </svg>
        <svg width="28" height="28" viewBox="0 0 28 28" className="ml-[33px]">
          <path d="M0 0 H28 V28 H0 Z" fill="#ee0a12" />
          <g fill="none" stroke="#fff" strokeWidth="2">
            <path d="M6 17 Q4 12 8 9 Q13 5 18 8 Q20 11 18 14 Q15 11 12 12 Q8 13 6 17 Z" />
            <path d="M13 12 L19 20 Q21 21 23 18" />
          </g>
        </svg>
        <svg width="26" height="18" viewBox="0 0 26 18" className="ml-[30px]">
          <path d="M1 1 H22 V16 H1 Z M23 5 h2 v7 h-2" fill="none" stroke="#fff" strokeWidth="2" />
          <path d="M4 4 H16 V13 H4 Z" fill="#fff" />
        </svg>
        <svg width="24" height="24" viewBox="0 0 24 24" className="ml-[32px]" fill="none" stroke="#fff" strokeWidth="1.5">
          <path d="M1 22 Q2 4 22 2 M6 22 Q7 9 22 7 M11 22 Q12 14 22 12" />
          <path d="M15 22 Q16 18 20 17" />
          <circle cx="20" cy="21" r="2" fill="#fff" />
        </svg>
        <svg width="30" height="26" viewBox="0 0 30 26" className="ml-[26px]" fill="none" stroke="#fff" strokeWidth="1.5">
          <path d="M1 9 H5 L10 3 V23 L5 17 H1 Z M14 9 Q17 13 14 17 M18 6 Q23 13 18 20 M23 3 Q30 13 23 23" />
        </svg>
        <svg width="28" height="28" viewBox="0 0 28 28" className="ml-[27px]">
          <path d="M0 0 H28 V23 H18 L14 28 L10 23 H0 Z" fill="#fff" />
          <path d="M5 7 H23 M5 12 H23 M5 17 H16" stroke="#000" strokeWidth="2" />
        </svg>
        <svg width="46" height="26" viewBox="0 0 46 26" className="ml-[26px]" fill="none" stroke="#fff" strokeWidth="2">
          <path d="M1 1 H45 V25 H1 Z" />
          <path d="M7 8 H40 M7 13 H40" strokeDasharray="2 2" />
          <path d="M7 19 H12 M14 19 H32 M34 19 H40" />
        </svg>
        <div className="ml-[24px] w-[104px] text-center text-[19px] leading-[30px]">
          12:59
          <br />
          02.08.2016
        </div>
        <span className="ml-[14px] h-[70px] w-[8px] border-l border-[#777]" />
      </div>
    </footer>
  )
}

export default function App() {
  return (
    <div className="flex min-h-screen flex-col bg-white font-['Noto_Sans',sans-serif] text-[19px] text-black">
      <header className="flex h-10 items-center pl-[3px]">
        <AudacityLogo size={26} />
        <h1 className="mt-[2px] ml-[6px] text-[20px]">Audacity</h1>
        <div className="ml-auto flex">
          <button aria-label="Minimieren" className="flex w-[79px] justify-center">
            <svg width="16" height="18" viewBox="0 0 16 18">
              <path d="M0 8.5 H16" stroke="#000" />
            </svg>
          </button>
          <button aria-label="Wiederherstellen" className="flex w-[79px] justify-center">
            <svg width="16" height="16" viewBox="0 0 16 16" fill="none" stroke="#000">
              <path d="M0.5 4.5 H11.5 V15.5 H0.5 Z M3.5 4.5 V0.5 H14.5 V11.5 H11.5" />
            </svg>
          </button>
          <button aria-label="Schließen" className="flex w-[80px] justify-center">
            <svg width="16" height="16" viewBox="0 0 16 16">
              <path d="M0 0 L16 16 M16 0 L0 16" stroke="#000" />
            </svg>
          </button>
        </div>
      </header>
      <nav className="flex h-[36px] items-center gap-[26px] pl-3">
        {MENUS.map((m) => (
          <button key={m}>{m}</button>
        ))}
      </nav>
      <Toolbars />
      <Timeline />
      <Track />
      <ScrollBar />
      <SelectionBar />
      <div className="flex h-[40px] bg-[#f6f6f6] py-1 leading-[38px]">
        <span className="ml-4 w-[342px] border-l-2 border-[#d4d4d4] pl-[7px]">Gestoppt.</span>
        <span className="flex-1 border-l-2 border-[#d4d4d4]" />
        <span className="w-[328px] border-l-2 border-[#d4d4d4] pl-[7px]">Aktueller Wert 88200</span>
      </div>
      <Taskbar />
    </div>
  )
}
